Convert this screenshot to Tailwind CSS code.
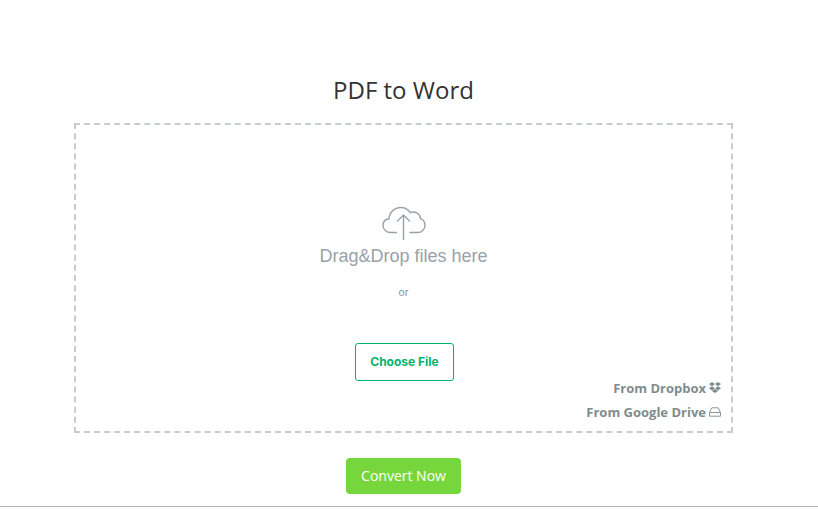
<!DOCTYPE html>
<html lang="en">
<head>
  <meta charset="UTF-8">
  <title>PDF to Word</title>
  <script src="https://cdn.jsdelivr.net/npm/@tailwindcss/browser@4"></script>
</head>
<body class="bg-white font-['Open_Sans',sans-serif] h-[509px] overflow-hidden">
  <div class="h-[507px] border-b border-[#b5b5b5] flex flex-col items-center">
    <h1 class="mt-[73px] h-[50px] self-start w-[807px] text-center text-[24px] leading-[34px] text-[#333]">PDF to Word</h1>
    <!-- Drop zone -->
    <div class="relative self-start ml-[74px] w-[659px] h-[310px] border-2 border-dashed border-[#c9cccf] flex flex-col items-center">
      <svg class="mt-[79px] w-[44px] h-[36px]" viewBox="0 0 44 36" fill="none" stroke="#98a2a9" stroke-width="1.400" stroke-linecap="round" stroke-linejoin="round">
        <path d="M14.500 28.500H9C4.300 28.500 1 25.300 1 21.500C1 17.900 3.500 15.200 7 14.700C7.300 8.600 12.300 3.500 18.800 3.500C22.900 3.500 26.300 5.500 28.300 8.700C29.300 8.200 30.400 8 31.500 8C35.400 8 38.300 10.900 38.500 14.600C41.300 15.700 43 18.300 43 21.300C43 25.300 39.800 28.500 35.500 28.500H28"/>
        <path d="M21.500 35.500V11M15.500 17L21.500 11L27.500 17"/>
      </svg>
      <p class="mt-[3px] font-['Liberation_Sans',sans-serif] text-[18px] leading-[26px] text-[#98a2a9]">Drag&amp;Drop files here</p>
      <p class="mt-[16px] font-['Liberation_Sans',sans-serif] text-[11px] leading-[14px] text-[#8d9499]">or</p>
      <button class="mt-[44px] ml-[2px] w-[99px] h-[38px] rounded-[3px] border border-[#00b56a] bg-white font-['Inter',sans-serif] text-[12px] font-bold text-[#00b56a]">Choose File</button>
      <!-- Cloud sources -->
      <div class="absolute right-[10px] bottom-[10px] flex flex-col items-end gap-[6px] text-[13px] leading-[18px] font-bold text-[#7e8c8d]">
        <a class="flex items-center gap-[3px]">From Dropbox
          <svg class="w-[12px] h-[13px] -mt-[2px]" viewBox="0 0 12 12" fill="#7e8c8d"><path d="M3 .5L6 2.600 3 4.700 0 2.600ZM9 .5L12 2.600 9 4.700 6 2.600ZM3 4.700L6 6.800 3 8.900 0 6.800ZM9 4.700L12 6.800 9 8.900 6 6.800ZM2.900 9.500L6 7.500 9.100 9.500 6 11.600Z"/></svg>
        </a>
        <a class="flex items-center gap-[3px]">From Google Drive
          <svg class="w-[12px] h-[10px]" viewBox="0 0 12 10" fill="none" stroke="#7e8c8d" stroke-width=".9"><path d="M.5 5.500L2.800.8H9.200L11.500 5.500V9.200H.5ZM.5 5.500H11.500"/></svg>
        </a>
      </div>
    </div>
    <button class="mt-[25px] w-[115px] h-[36px] rounded-[4px] bg-[#77d63b] text-[14px] pb-[1px] text-white -ml-[11px]">Convert Now</button>
  </div>
</body>
</html>
